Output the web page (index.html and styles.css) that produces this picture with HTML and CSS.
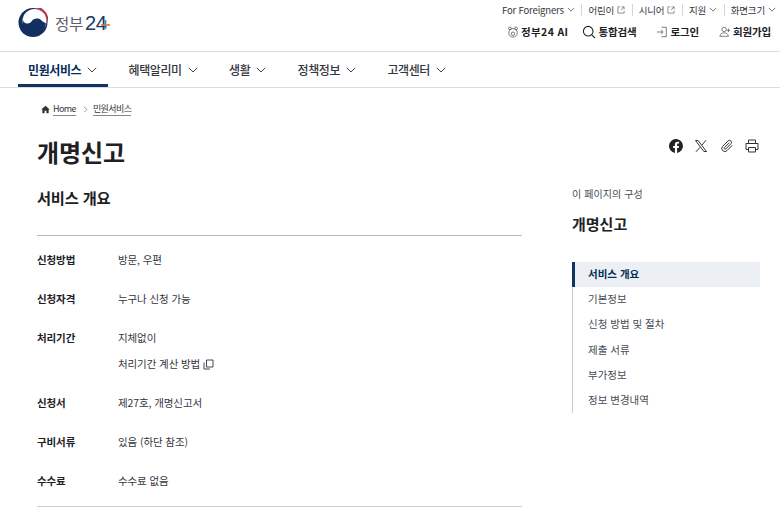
FILE: index.html
```html
<!DOCTYPE html>
<html lang="ko">
<head>
<meta charset="utf-8">
<title>개명신고</title>
<link rel="stylesheet" href="styles.css">
</head>
<body>
<header class="header">
  <a class="logo">
    <svg class="logo-mark" width="30" height="29" viewBox="0 0 30 29">
      <circle cx="15" cy="14.500" r="14.500" fill="#12305f"/>
      <circle cx="16.500" cy="13" r="12" fill="#fff"/>
      <path d="M11.500 .4A14.500 14.500 0 0 1 29.500 15A12.500 12.500 0 0 0 11.500 .4Z" fill="#c8283e"/>
      <path d="M4.800 11.500A4.800 4.800 0 0 0 13.500 13.500C15 10.500 20 9.500 23 12C24.500 13.300 25.500 14 28 15.500A14.500 14.500 0 0 1 4.800 25Z" fill="#12305f"/>
    </svg>
    <span class="logo-text">정부<span class="logo-num">24<svg class="logo-plus" viewBox="0 0 9 9"><path d="M4.500 0V9" stroke="#2f86b8" stroke-width="1.600"/><path d="M0 5H9" stroke="#e2703a" stroke-width="1.600"/></svg></span></span>
  </a>
  <div class="header-right">
    <ul class="util">
      <li>For Foreigners <svg class="chev-s" viewBox="0 0 10 6"><path d="M1 1l4 4 4-4"/></svg></li>
      <li>어린이 <svg class="ext" viewBox="0 0 9 9"><path d="M3.500 1H1v7h7V5.500M5 1h3v3M8 1L4.500 4.500"/></svg></li>
      <li>시니어 <svg class="ext" viewBox="0 0 9 9"><path d="M3.500 1H1v7h7V5.500M5 1h3v3M8 1L4.500 4.500"/></svg></li>
      <li>지원 <svg class="chev-s" viewBox="0 0 10 6"><path d="M1 1l4 4 4-4"/></svg></li>
      <li>화면크기 <svg class="chev-s" viewBox="0 0 10 6"><path d="M1 1l4 4 4-4"/></svg></li>
    </ul>
    <div class="actions">
      <a class="action action-ai"><svg class="act-ic thin" viewBox="0 0 14 14"><circle cx="7" cy="8" r="5"/><circle cx="3.400" cy="2.800" r="1.600"/><circle cx="10.600" cy="2.800" r="1.600"/><circle cx="7" cy="9" r="2"/></svg>정부24 AI</a>
      <a class="action"><svg class="act-ic search" viewBox="0 0 14 14"><circle cx="6.200" cy="6.200" r="4.800"/><path d="M9.800 9.800l3.200 3.200"/></svg>통합검색</a>
      <a class="action action-gap"><svg class="act-ic thin" viewBox="0 0 14 14"><path d="M1 7h7M5.800 4.500L8.300 7l-2.500 2.500M6.500 1.500h5.500v11H6.500"/></svg>로그인</a>
      <a class="action action-gap"><svg class="act-ic thin" viewBox="0 0 14 14"><circle cx="6" cy="4" r="2.600"/><path d="M1 12c.6-3 2.500-4 5-4s4.400 1 5 4zM11 3v4M9 5h4"/></svg>회원가입</a>
    </div>
  </div>
</header>
<nav class="gnb">
  <a class="gnb-item active">민원서비스<svg class="chev" viewBox="0 0 10 6"><path d="M.8.8L5 5 9.200.8"/></svg></a>
  <a class="gnb-item">혜택알리미<svg class="chev" viewBox="0 0 10 6"><path d="M.8.8L5 5 9.200.8"/></svg></a>
  <a class="gnb-item">생활<svg class="chev" viewBox="0 0 10 6"><path d="M.8.8L5 5 9.200.8"/></svg></a>
  <a class="gnb-item">정책정보<svg class="chev" viewBox="0 0 10 6"><path d="M.8.8L5 5 9.200.8"/></svg></a>
  <a class="gnb-item">고객센터<svg class="chev" viewBox="0 0 10 6"><path d="M.8.8L5 5 9.200.8"/></svg></a>
</nav>
<div class="crumbs">
  <svg class="home" viewBox="0 0 10 10"><path d="M5 .8L.3 5H1.500V9.300H4V6.500H6V9.300H8.500V5H9.700Z"/></svg>
  <a class="crumb">Home</a>
  <svg class="crumb-sep" viewBox="0 0 5 8"><path d="M1 1l3 3-3 3"/></svg>
  <a class="crumb">민원서비스</a>
</div>
<div class="title-row">
  <h1 class="title">개명신고</h1>
  <div class="tools">
    <svg class="tool" viewBox="0 0 14 14"><path class="fill" d="M14 7a7 7 0 1 0-8.100 6.900V9H4.100V7h1.800V5.400c0-1.800 1-2.700 2.600-2.700.8 0 1.600.1 1.600.1v1.700h-.9c-.9 0-1.100.5-1.100 1.100V7h1.900l-.3 2H8.100v4.900A7 7 0 0 0 14 7z"/></svg>
    <svg class="tool" viewBox="0 0 14 14"><path class="line" d="M1.500 1.500h2.600l8.400 11H9.900zM12 1.200L8 6M6 8.300L2 12.800"/></svg>
    <svg class="tool" viewBox="0 0 14 14"><path class="line" d="M12.300 6.300L7 11.600a3 3 0 0 1-4.400-4.300L8 2a2 2 0 0 1 2.900 2.800L5.700 10a1 1 0 0 1-1.400-1.400l4.800-4.800"/></svg>
    <svg class="tool" viewBox="0 0 14 14"><path class="line" d="M3.500 4.500V1h7v3.500M3.500 10.500H1v-6h12v6h-2.500M3.500 8.500h7V13h-7z"/></svg>
  </div>
</div>
<main class="main">
  <section class="content">
    <h2 class="sec-title">서비스 개요</h2>
    <dl class="info">
      <div class="row"><dt>신청방법</dt><dd>방문, 우편</dd></div>
      <div class="row"><dt>신청자격</dt><dd>누구나 신청 가능</dd></div>
      <div class="row"><dt>처리기간</dt><dd>지체없이<span class="calc">처리기간 계산 방법 <svg class="copy" viewBox="0 0 11 11"><path d="M3.500 1h6.500v7H3.500zM1 3.500V10h6"/></svg></span></dd></div>
      <div class="row"><dt>신청서</dt><dd>제27호, 개명신고서</dd></div>
      <div class="row"><dt>구비서류</dt><dd>있음 (하단 참조)</dd></div>
      <div class="row"><dt>수수료</dt><dd>수수료 없음</dd></div>
    </dl>
  </section>
  <aside class="toc">
    <p class="toc-cap">이 페이지의 구성</p>
    <p class="toc-title">개명신고</p>
    <ul class="toc-list">
      <li class="on">서비스 개요</li>
      <li>기본정보</li>
      <li>신청 방법 및 절차</li>
      <li>제출 서류</li>
      <li>부가정보</li>
      <li>정보 변경내역</li>
    </ul>
  </aside>
</main>
</body>
</html>
```
FILE: styles.css
```css
* { box-sizing: border-box; }
html, body { margin: 0; padding: 0; height: 519px; overflow: hidden; }
body { background: #fff; color: #1e2124; font-family: "Noto Sans CJK KR", "Noto Sans", sans-serif; }
a { color: inherit; text-decoration: none; }
ul, dl, dd, p, h1, h2 { margin: 0; padding: 0; }
ul { list-style: none; }

.header { height: 52px; border-bottom: 1px solid #dcdcdc; display: flex; justify-content: space-between; padding: 0 4px 0 18px; }
.logo { display: flex; align-items: center; gap: 7px; height: 44px; }
.logo-mark { display: block; }
.logo-text { font-size: 15.500px; color: #5a6069; letter-spacing: -0.3px; line-height: 20px; display: flex; align-items: center; gap: 2px; margin-top: 1px; }
.logo-num { position: relative; color: #173a66; font-family: "Liberation Sans", sans-serif; font-size: 20px; letter-spacing: -0.4px; width: 25px; }
.logo-plus { position: absolute; left: 16px; top: 7px; width: 9px; height: 9px; display: block; }

.header-right { display: flex; flex-direction: column; align-items: flex-end; }
.util { display: flex; height: 19px; align-items: center; font-size: 9.500px; color: #33363d; letter-spacing: -0.15px; }
.util li { display: flex; align-items: center; gap: 3px; padding: 0 6.500px 0 7px; position: relative; }
.util li + li::before { content: ""; position: absolute; left: 0; top: 1px; bottom: 1px; width: 1px; background: #d6d6d6; }
.util li:last-child { padding-right: 0; }
.chev-s { width: 8px; height: 5px; fill: none; stroke: #555; stroke-width: 1; }
.ext { width: 8px; height: 8px; fill: none; stroke: #777; stroke-width: .9; }
.actions { display: flex; height: 25px; align-items: center; gap: 16px; padding-right: 5px; }
.action { display: flex; align-items: center; gap: 2px; font-size: 10.500px; font-weight: 700; color: #1e2124; letter-spacing: -0.15px; }
.action-ai { letter-spacing: .35px; }
.action-gap { margin-left: 4px; }
.act-ic { width: 12px; height: 12px; fill: none; stroke: #222; stroke-width: 1.100; }
.search { width: 14px; height: 14px; margin-left: -2px; }
.thin { stroke-width: .8; stroke: #444; }

.gnb { height: 36px; border-bottom: 1px solid #dcdcdc; display: flex; padding-left: 18px; }
.gnb-item { display: flex; align-items: center; gap: 6px; height: 35px; font-size: 12px; font-weight: 500; color: #33363d; letter-spacing: -0.4px; padding: 3px 11px 0 10px; margin-right: 10.300px; border-bottom: 3px solid transparent; }
.gnb-item.active { color: #052b57; font-weight: 700; border-bottom-color: #0c3565; }
.chev { width: 10px; height: 6px; fill: none; stroke: #444; stroke-width: 1; }

.crumbs { display: flex; align-items: center; height: 14px; margin: 14px 0 0 41px; gap: 3px; font-size: 9px; color: #33363d; letter-spacing: -0.6px; }
.home { width: 9px; height: 9px; fill: #333; }
.crumb { border-bottom: 1px solid #888; line-height: 12px; }
.crumb-sep { width: 5px; height: 7px; fill: none; stroke: #888; stroke-width: 1; margin: 0 2px 0 4px; }

.title-row { display: flex; justify-content: space-between; align-items: center; margin-top: 14px; padding: 0 21px 0 37px; height: 44px; }
.title { font-size: 24px; font-weight: 700; letter-spacing: -0.1px; color: #1e2124; line-height: 36px; }
.tools { display: flex; gap: 11.500px; margin-top: -13px; }
.tool { width: 14px; height: 14px; display: block; }
.fill { fill: #222; }
.line { fill: none; stroke: #333; stroke-width: 1; }

.main { display: flex; padding: 0 20px 0 37px; justify-content: space-between; }
.content { width: 485px; }
.sec-title { font-size: 15.300px; font-weight: 700; letter-spacing: -0.2px; line-height: 24px; margin-top: 11px; border-bottom: 1px solid #b9b9b9; height: 51px; }
.info { padding: 12px 0 13px; border-bottom: 1px solid #cfcfcf; }
.row { display: flex; font-size: 10.500px; letter-spacing: -0.1px; line-height: 24px; margin-bottom: 15px; }
.row:last-child { margin-bottom: 0; }
.row dt { width: 81px; font-weight: 700; color: #1e2124; }
.row dd { color: #33363d; }
.calc { display: flex; align-items: center; gap: 3px; margin-top: 2px; }
.copy { width: 11px; height: 11px; fill: none; stroke: #333; stroke-width: .9; }

.toc { width: 188px; margin-top: 10px; }
.toc-cap { font-size: 10px; letter-spacing: .1px; color: #464c53; line-height: 16px; margin-top: 2px; }
.toc-title { font-size: 15px; font-weight: 700; line-height: 22px; margin-top: 11px; }
.toc-list { margin-top: 27px; border-left: 1px solid #c6cdd5; }
.toc-list li { height: 25.200px; line-height: 23.500px; font-size: 10.500px; color: #464c53; padding-left: 15px; }
.toc-list li.on { background: #eceff4; color: #052b57; font-weight: 700; border-left: 3px solid #0c3565; margin-left: -1px; padding-left: 13px; }
```
